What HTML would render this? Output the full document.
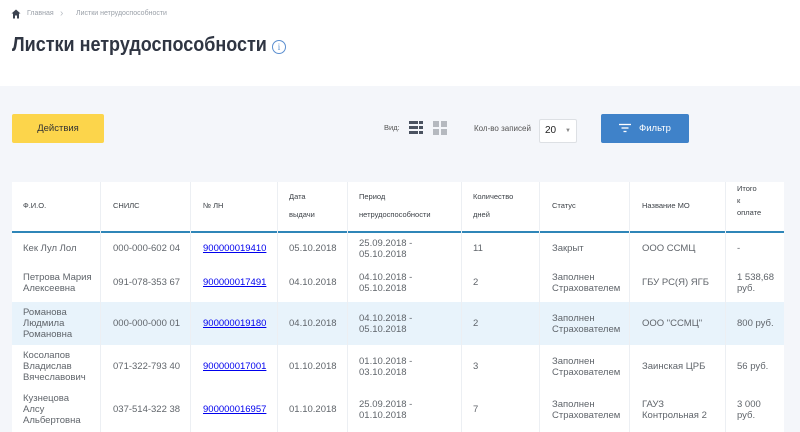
<!DOCTYPE html>
<html><head><meta charset="utf-8"><style>
*{margin:0;padding:0;box-sizing:border-box}
body{width:800px;height:432px;overflow:hidden;background:#f4f6fa;font-family:"Liberation Sans",sans-serif;position:relative}
.top{position:absolute;left:0;top:0;width:800px;height:86px;background:#fff}
.a{position:absolute}
.t{position:absolute;font-size:9.5px;color:#60656b;line-height:11px}
.h{position:absolute;font-size:7.5px;color:#3a3f45;line-height:18px}
.lnk{color:#0000ee;text-decoration:underline}
.vl{position:absolute;top:182px;width:1px;height:250px;background:#eceff3}
</style></head><body>
<div class="top"></div>
<svg class="a" style="left:11px;top:9px" width="10" height="10" viewBox="0 0 10 10"><path d="M5 0.5L0.5 4.5H2V9.5H4V6.5H6V9.5H8V4.5H9.5Z" fill="#3c4350"/></svg>
<div class="a" style="left:27px;top:10px;font-size:7px;color:#9aa0a8">Главная</div>
<div class="a" style="left:60px;top:8px;font-size:10px;color:#b8bdc4">›</div>
<div class="a" style="left:76px;top:10px;font-size:7px;color:#9aa0a8">Листки нетрудоспособности</div>
<div class="a" style="left:12px;top:34px;font-size:20px;font-weight:bold;color:#2f3542;transform:scaleX(0.9);transform-origin:0 0;white-space:nowrap">Листки нетрудоспособности</div>
<div class="a" style="left:272px;top:40px;width:14px;height:14px;border:1.3px solid #5b8fd0;border-radius:50%;color:#5b8fd0;font-size:9px;text-align:center;line-height:12px;font-family:'Liberation Serif',serif">i</div>

<div class="a" style="left:12px;top:114px;width:92px;height:29px;background:#fcd54b;border-radius:2px;font-size:9.5px;color:#333;text-align:center;line-height:29px">Действия</div>
<div class="a" style="left:384px;top:123px;font-size:7.5px;color:#555">Вид:</div>
<svg class="a" style="left:409px;top:121px" width="14" height="14"><g fill="#4a5260"><rect x="0" y="0" width="9" height="3"/><rect x="10" y="0" width="4" height="3"/><rect x="0" y="5" width="9" height="3"/><rect x="10" y="5" width="4" height="3"/><rect x="0" y="10" width="9" height="3"/><rect x="10" y="10" width="4" height="3"/></g></svg>
<svg class="a" style="left:433px;top:121px" width="14" height="14"><g fill="#b5b9bf"><rect x="0" y="0" width="6" height="6"/><rect x="8" y="0" width="6" height="6"/><rect x="0" y="8" width="6" height="6"/><rect x="8" y="8" width="6" height="6"/></g></svg>
<div class="a" style="left:474px;top:124px;font-size:8px;color:#555">Кол-во записей</div>
<div class="a" style="left:539px;top:119px;width:38px;height:24px;background:#fff;border:1px solid #dde0e4;border-radius:2px;font-size:10px;color:#222;line-height:22px;padding-left:5px">20<span style="position:absolute;right:5px;top:0;font-size:6px;color:#888">▼</span></div>
<div class="a" style="left:601px;top:114px;width:88px;height:29px;background:#3f82c9;border-radius:2px;color:#fff;font-size:9.5px;line-height:29px;padding-left:38px">Фильтр</div>
<svg class="a" style="left:619px;top:123px" width="12" height="10"><g stroke="#fff" stroke-width="1.3"><line x1="0" y1="1.5" x2="12" y2="1.5"/><line x1="2.5" y1="5" x2="9.5" y2="5"/><line x1="4.5" y1="8.5" x2="7.5" y2="8.5"/></g></svg>

<div class="a" style="left:12px;top:182px;width:772px;height:250px;background:#fff"></div>
<div class="a" style="left:12px;top:302px;width:772px;height:43px;background:#e8f3fb"></div>
<div class="a" style="left:12px;top:231px;width:772px;height:2px;background:#2f86b8"></div>
<div class="vl" style="left:100px"></div><div class="vl" style="left:190px"></div><div class="vl" style="left:277px"></div><div class="vl" style="left:347px"></div><div class="vl" style="left:461px"></div><div class="vl" style="left:539px"></div><div class="vl" style="left:629px"></div><div class="vl" style="left:725px"></div>

<div class="h" style="left:23px;top:197px">Ф.И.О.</div>
<div class="h" style="left:113px;top:197px">СНИЛС</div>
<div class="h" style="left:203px;top:197px">№ ЛН</div>
<div class="h" style="left:289px;top:188px">Дата<br>выдачи</div>
<div class="h" style="left:359px;top:188px">Период<br>нетрудоспособности</div>
<div class="h" style="left:473px;top:188px">Количество<br>дней</div>
<div class="h" style="left:552px;top:197px">Статус</div>
<div class="h" style="left:642px;top:197px">Название МО</div>
<div class="h" style="left:737px;top:183px;line-height:12px">Итого<br>к<br>оплате</div>

<div class="t" style="left:23px;top:243px">Кек Лул Лол</div>
<div class="t" style="left:113px;top:243px">000-000-602 04</div>
<div class="t lnk" style="left:203px;top:243px">900000019410</div>
<div class="t" style="left:289px;top:243px">05.10.2018</div>
<div class="t" style="left:359px;top:238px">25.09.2018 -<br>05.10.2018</div>
<div class="t" style="left:473px;top:243px">11</div>
<div class="t" style="left:552px;top:243px">Закрыт</div>
<div class="t" style="left:642px;top:243px">ООО ССМЦ</div>
<div class="t" style="left:737px;top:243px">-</div>

<div class="t" style="left:23px;top:272px">Петрова Мария<br>Алексеевна</div>
<div class="t" style="left:113px;top:277px">091-078-353 67</div>
<div class="t lnk" style="left:203px;top:277px">900000017491</div>
<div class="t" style="left:289px;top:277px">04.10.2018</div>
<div class="t" style="left:359px;top:272px">04.10.2018 -<br>05.10.2018</div>
<div class="t" style="left:473px;top:277px">2</div>
<div class="t" style="left:552px;top:272px">Заполнен<br>Страхователем</div>
<div class="t" style="left:642px;top:277px">ГБУ РС(Я) ЯГБ</div>
<div class="t" style="left:737px;top:272px">1 538,68<br>руб.</div>

<div class="t" style="left:23px;top:307px">Романова<br>Людмила<br>Романовна</div>
<div class="t" style="left:113px;top:318px">000-000-000 01</div>
<div class="t lnk" style="left:203px;top:318px">900000019180</div>
<div class="t" style="left:289px;top:318px">04.10.2018</div>
<div class="t" style="left:359px;top:313px">04.10.2018 -<br>05.10.2018</div>
<div class="t" style="left:473px;top:318px">2</div>
<div class="t" style="left:552px;top:313px">Заполнен<br>Страхователем</div>
<div class="t" style="left:642px;top:318px">ООО "ССМЦ"</div>
<div class="t" style="left:737px;top:318px">800 руб.</div>

<div class="t" style="left:23px;top:350px">Косолапов<br>Владислав<br>Вячеславович</div>
<div class="t" style="left:113px;top:361px">071-322-793 40</div>
<div class="t lnk" style="left:203px;top:361px">900000017001</div>
<div class="t" style="left:289px;top:361px">01.10.2018</div>
<div class="t" style="left:359px;top:356px">01.10.2018 -<br>03.10.2018</div>
<div class="t" style="left:473px;top:361px">3</div>
<div class="t" style="left:552px;top:356px">Заполнен<br>Страхователем</div>
<div class="t" style="left:642px;top:361px">Заинская ЦРБ</div>
<div class="t" style="left:737px;top:361px">56 руб.</div>

<div class="t" style="left:23px;top:393px">Кузнецова<br>Алсу<br>Альбертовна</div>
<div class="t" style="left:113px;top:404px">037-514-322 38</div>
<div class="t lnk" style="left:203px;top:404px">900000016957</div>
<div class="t" style="left:289px;top:404px">01.10.2018</div>
<div class="t" style="left:359px;top:399px">25.09.2018 -<br>01.10.2018</div>
<div class="t" style="left:473px;top:404px">7</div>
<div class="t" style="left:552px;top:399px">Заполнен<br>Страхователем</div>
<div class="t" style="left:642px;top:399px">ГАУЗ<br>Контрольная 2</div>
<div class="t" style="left:737px;top:399px">3 000<br>руб.</div>
</body></html>
